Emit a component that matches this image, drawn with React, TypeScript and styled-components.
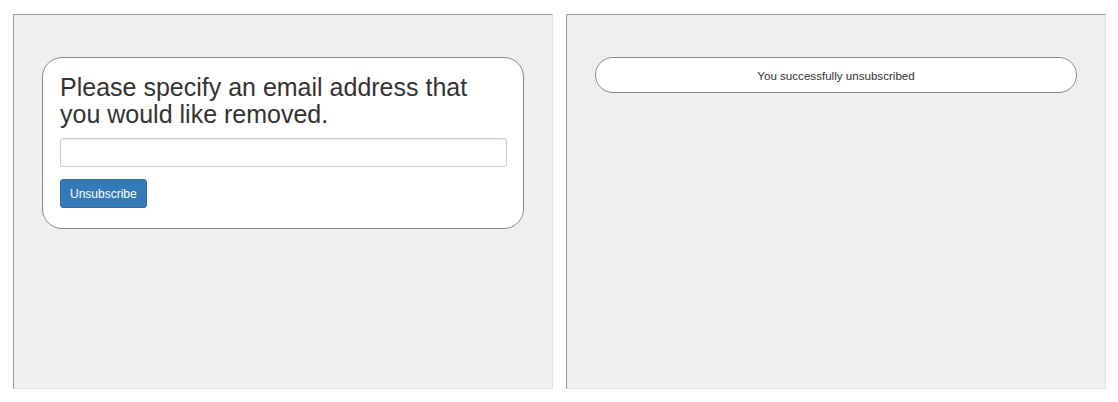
import React, { useState } from 'react';
import styled, { createGlobalStyle } from 'styled-components';

const GlobalStyle = createGlobalStyle`
  html, body {
    margin: 0;
    padding: 0;
    background: #ffffff;
  }
  body {
    font-family: 'Liberation Sans', Arial, sans-serif;
    color: #333;
  }
`;

const Page = styled.div`
  display: flex;
  gap: 13px;
  padding: 14px 12px 0 13px;
`;

const Frame = styled.div`
  box-sizing: border-box;
  width: 540px;
  height: 375px;
  background: #efefef;
  border-top: 1px solid #9a9a9a;
  border-left: 1px solid #9a9a9a;
  border-right: 1px solid #e4e4e4;
  border-bottom: 1px solid #e4e4e4;
  padding: 42px 28px 0 28px;
`;

const Card = styled.div<{ $pill?: boolean }>`
  box-sizing: border-box;
  background: #fff;
  border: 1px solid #8a8a8a;
  border-radius: ${p => (p.$pill ? '18px' : '20px')};
  padding: ${p => (p.$pill ? '0' : '16px 16px 20px 17px')};
  ${p => p.$pill && `
    height: 36px;
    display: flex;
    align-items: center;
    justify-content: center;
  `}
`;

const Heading = styled.h3`
  margin: 0 0 10px 0;
  font-size: 25px;
  font-weight: 400;
  line-height: 27px;
  color: #333;
  padding-right: 20px;
`;

const EmailInput = styled.input`
  display: block;
  box-sizing: border-box;
  width: 100%;
  height: 29px;
  padding: 5px 10px;
  font-size: 12px;
  font-family: inherit;
  border: 1px solid #ccc;
  border-radius: 3px;
  background: #fff;
  box-shadow: inset 0 1px 1px rgba(0, 0, 0, 0.075);
  outline: none;
`;

const Button = styled.button`
  display: block;
  margin-top: 12px;
  height: 29px;
  padding: 4px 9px;
  font-size: 12px;
  line-height: 1.5;
  font-family: inherit;
  color: #fff;
  background: #337ab7;
  border: 1px solid #2e6da4;
  border-radius: 3px;
  cursor: pointer;
`;

const Message = styled.span`
  font-size: 11.6px;
  color: #333;
`;

const App: React.FC = () => {
  const [email, setEmail] = useState('');

  return (
    <>
      <GlobalStyle />
      <Page>
        <Frame>
          <Card>
            <Heading>Please specify an email address that you would like removed.</Heading>
            <EmailInput value={email} onChange={e => setEmail(e.target.value)} />
            <Button>Unsubscribe</Button>
          </Card>
        </Frame>
        <Frame>
          <Card $pill>
            <Message>You successfully unsubscribed</Message>
          </Card>
        </Frame>
      </Page>
    </>
  );
};

export default App;
